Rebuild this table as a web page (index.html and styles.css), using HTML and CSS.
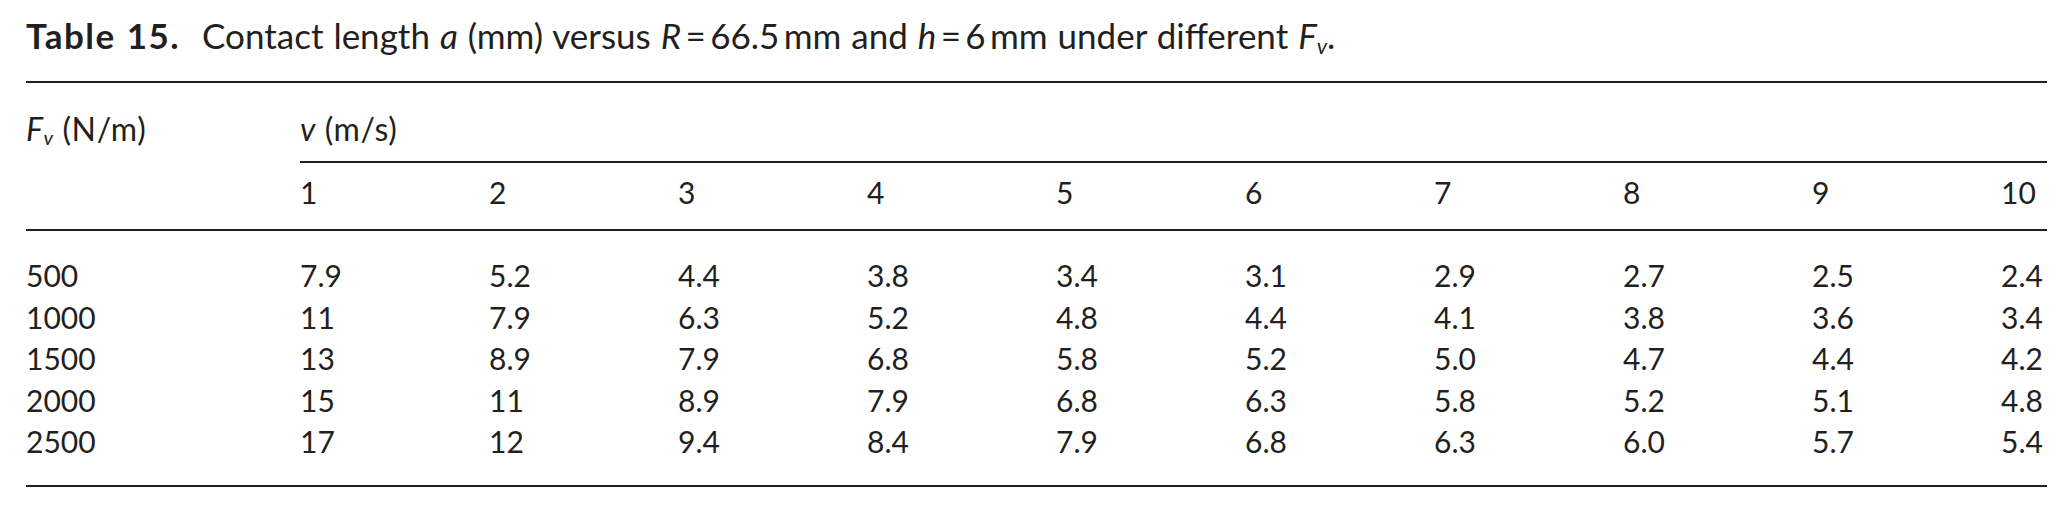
FILE: index.html
```html
<!DOCTYPE html>
<html lang="en">
<head>
<meta charset="utf-8">
<title>Table 15</title>
<link rel="stylesheet" href="styles.css">
</head>
<body>
<div class="wrap">
  <p class="caption"><span class="label">Table 15.</span>Contact length <i>a</i> (mm) versus <i>R</i>&thinsp;=&thinsp;66.5&thinsp;mm and <i>h</i>&thinsp;=&thinsp;6&thinsp;mm under different <i>F<sub>v</sub></i>.</p>
  <table class="data">
    <colgroup>
      <col class="c-first">
      <col class="c-mid"><col class="c-mid"><col class="c-mid"><col class="c-mid"><col class="c-mid">
      <col class="c-mid"><col class="c-mid"><col class="c-mid"><col class="c-mid">
      <col class="c-last">
    </colgroup>
    <thead>
      <tr class="h1">
        <th><i>F<sub>v</sub></i> (N/m)</th>
        <th colspan="10"><i>v</i> (m/s)</th>
      </tr>
      <tr class="h2">
        <th class="blank"></th>
        <th>1</th><th>2</th><th>3</th><th>4</th><th>5</th><th>6</th><th>7</th><th>8</th><th>9</th><th>10</th>
      </tr>
    </thead>
    <tbody>
      <tr class="first"><td>500</td><td>7.9</td><td>5.2</td><td>4.4</td><td>3.8</td><td>3.4</td><td>3.1</td><td>2.9</td><td>2.7</td><td>2.5</td><td>2.4</td></tr>
      <tr><td>1000</td><td>11</td><td>7.9</td><td>6.3</td><td>5.2</td><td>4.8</td><td>4.4</td><td>4.1</td><td>3.8</td><td>3.6</td><td>3.4</td></tr>
      <tr><td>1500</td><td>13</td><td>8.9</td><td>7.9</td><td>6.8</td><td>5.8</td><td>5.2</td><td>5.0</td><td>4.7</td><td>4.4</td><td>4.2</td></tr>
      <tr><td>2000</td><td>15</td><td>11</td><td>8.9</td><td>7.9</td><td>6.8</td><td>6.3</td><td>5.8</td><td>5.2</td><td>5.1</td><td>4.8</td></tr>
      <tr class="last"><td>2500</td><td>17</td><td>12</td><td>9.4</td><td>8.4</td><td>7.9</td><td>6.8</td><td>6.3</td><td>6.0</td><td>5.7</td><td>5.4</td></tr>
    </tbody>
  </table>
</div>
</body>
</html>
```
FILE: styles.css
```css
html, body {
  margin: 0;
  padding: 0;
  background: #ffffff;
}

body {
  font-family: "Lato", "Noto Sans", sans-serif;
  font-size: 30px;
  color: #231f20;
}

.wrap {
  padding: 15px 26px 0 26px;
}

.caption {
  margin: 0 0 26px 0;
  font-size: 35px;
  line-height: 40px;
  word-spacing: 1px;
  white-space: nowrap;
}

.caption .label {
  font-weight: 700;
  letter-spacing: 1.5px;
  margin-right: 22px;
}

sub {
  font-size: 0.62em;
  vertical-align: -0.22em;
  line-height: 0;
}

.data {
  width: 2021px;
  table-layout: fixed;
  border-collapse: separate;
  border-spacing: 0;
  border-top: 2px solid #231f20;
  border-bottom: 2px solid #231f20;
}

.c-first { width: 274px; }
.c-mid { width: 189px; }
.c-last { width: 46px; }

.data th,
.data td {
  padding: 0;
  text-align: left;
  font-weight: 400;
  white-space: nowrap;
  vertical-align: top;
}

.h1 th {
  padding-top: 26px;
  padding-bottom: 12px;
  font-size: 32px;
  letter-spacing: 0.6px;
  line-height: 40px;
}

.h2 th {
  border-top: 2px solid #231f20;
  border-bottom: 2px solid #231f20;
  padding-top: 9px;
  padding-bottom: 17px;
  line-height: 40px;
}

.h2 th.blank {
  border-top-color: transparent;
}

.data td {
  line-height: 41.5px;
}

.data tr.first td {
  padding-top: 24px;
}

.data tr.last td {
  padding-bottom: 22px;
}
```
